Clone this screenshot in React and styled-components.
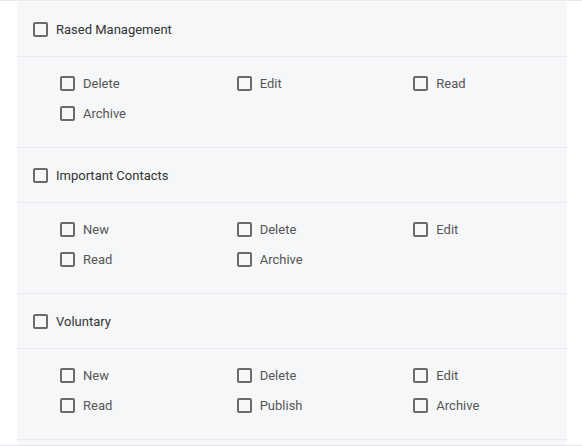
import React from "react";
import styled, { createGlobalStyle } from "styled-components";

const Global = createGlobalStyle`
  html, body { margin: 0; padding: 0; background: #fff; }
  body { font-family: Roboto, "Noto Sans", Arial, sans-serif; }
`;

const Page = styled.div`
  border-top: 1px solid #e8e8ea;
  border-bottom: 1px solid #e6e4f0;
  padding-top: 1px;
  width: 582px;
  box-sizing: border-box;
`;

const Panel = styled.div`
  margin-left: 17px;
  width: 550px;
  padding-bottom: 5px;
  background: #f6f7f9;
`;

const Section = styled.div``;

const Header = styled.div`
  height: 54px;
  display: flex;
  align-items: center;
  padding-left: 16px;
  border-bottom: 1px solid #e7e9ef;
  gap: 8px;
  font-size: 13px;
  color: #333;
`;

const Body = styled.div`
  padding: 11px 0 19px 43px;
  border-bottom: 1px solid #e7e9ef;
  display: grid;
  grid-template-columns: repeat(3, 176.67px);
  grid-auto-rows: 30px;
`;

const Item = styled.label`
  display: flex;
  align-items: center;
  gap: 8px;
  font-size: 13px;
  color: #555;
`;

const Box = styled.span`
  width: 15px;
  height: 15px;
  box-sizing: border-box;
  border: 2px solid #6b6b6b;
  border-radius: 2px;
  flex: none;
`;

const data = [
  { title: "Rased Management", items: ["Delete", "Edit", "Read", "Archive"] },
  { title: "Important Contacts", items: ["New", "Delete", "Edit", "Read", "Archive"] },
  { title: "Voluntary", items: ["New", "Delete", "Edit", "Read", "Publish", "Archive"] },
];

export default function App() {
  return (
    <>
      <Global />
      <Page>
        <Panel>
          {data.map((s) => (
            <Section key={s.title}>
              <Header>
                <Box />
                <span>{s.title}</span>
              </Header>
              <Body>
                {s.items.map((it) => (
                  <Item key={it}>
                    <Box />
                    <span>{it}</span>
                  </Item>
                ))}
              </Body>
            </Section>
          ))}
        </Panel>
      </Page>
    </>
  );
}
